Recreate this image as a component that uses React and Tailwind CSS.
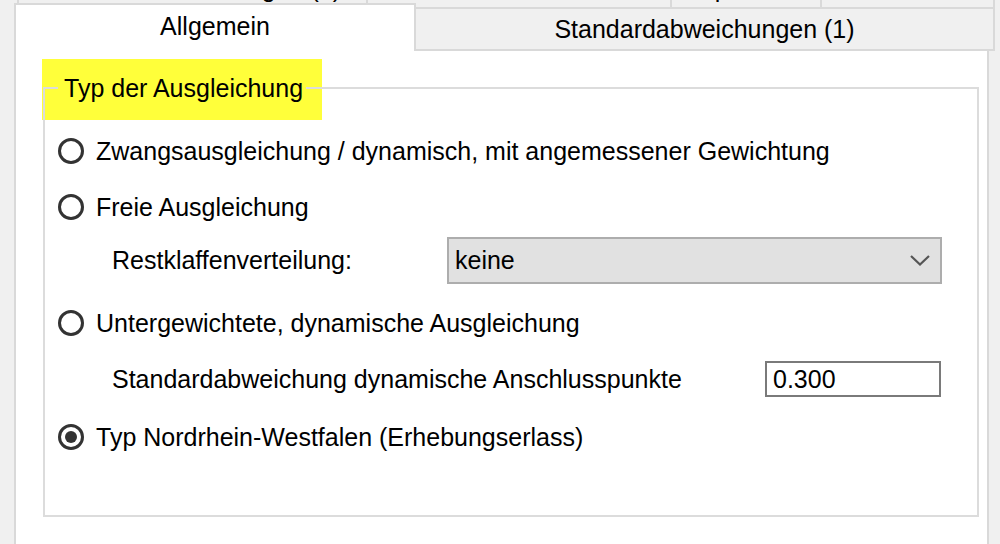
import React from "react";

const BACK_TABS = [
  { label: "Beobachtungen (1)", w: "w-[351px]", align: "justify-end pr-[25px]" },
  { label: "Netz", w: "w-[304px]", align: "justify-center" },
  { label: "Optionen", w: "w-[150px]", align: "justify-center" },
  { label: "Ausreißer", w: "w-[173px]", align: "justify-center" },
];

function Radio({ checked }) {
  return (
    <span className="w-[26px] h-[26px] rounded-full border-[3px] border-[#333333] bg-white flex items-center justify-center shrink-0">
      {checked && <span className="w-[12px] h-[12px] rounded-full bg-[#333333]" />}
    </span>
  );
}

function Option({ checked, label, height }) {
  return (
    <div className={`flex items-center gap-[12px] pl-[13px] ${height}`}>
      <Radio checked={checked} />
      <span className="leading-none">{label}</span>
    </div>
  );
}

export default function App() {
  return (
    <div className="w-[1000px] h-[544px] overflow-hidden bg-[#f0f0f0] text-black text-[25px] font-['Liberation_Sans',Arial,sans-serif] flex flex-col">
      {/* back row of tabs, only the bottom edge is visible */}
      <div className="flex h-[9px] ml-[17px] w-[978px] border-b-2 border-[#d9d9d9] overflow-hidden shrink-0">
        {BACK_TABS.map((t, i) => (
          <div
            key={t.label}
            className={`${t.w} flex items-start border-r-2 border-[#d9d9d9] ${i === 0 ? "border-l-2" : ""} ${t.align}`}
          >
            <span className="leading-none -mt-[24px] whitespace-nowrap">{t.label}</span>
          </div>
        ))}
      </div>

      {/* front row of tabs */}
      <div className="flex items-end h-[42px] ml-[14px] shrink-0">
        <div className="w-[402px] h-[48px] bg-white border-x-2 border-t-2 border-[#d9d9d9] flex justify-center pt-[9px]">
          <span className="leading-none">Allgemein</span>
        </div>
        <div className="w-[579px] h-[42px] bg-[#f0f0f0] border-r-2 border-b-2 border-[#d9d9d9] flex justify-center pt-[8px]">
          <span className="leading-none">Standardabweichungen (1)</span>
        </div>
      </div>

      {/* tab page */}
      <div className="relative isolate ml-[14px] w-[975px] flex-1 bg-white border-x-2 border-[#d9d9d9]">
        <div className="relative ml-[27px] mt-[23px] w-[936px]">
          <div className="absolute -left-[1px] -top-[15px] w-[280px] h-[61px] bg-[#ffff3a] -z-10" />

          <div className="flex items-center h-[28px]">
            <div className="w-[15px] border-t-2 border-[#dcdcdc]" />
            <span className="leading-none pl-[6px] pr-[3px] whitespace-nowrap">Typ der Ausgleichung</span>
            <div className="flex-1 border-t-2 border-[#dcdcdc]" />
          </div>

          <div className="-mt-[14px] h-[429px] border-x-2 border-b-2 border-[#dcdcdc] pt-[35px]">
            <Option label="Zwangsausgleichung / dynamisch, mit angemessener Gewichtung" height="h-[56px]" />
            <Option label="Freie Ausgleichung" height="h-[56px]" />

            <div className="flex items-center h-[50px] pl-[67px]">
              <span className="w-[335px] leading-none">Restklaffenverteilung:</span>
              <div className="w-[495px] h-[47px] bg-[#e1e1e1] border-2 border-[#adadad] flex items-center justify-between pl-[6px] pr-[10px]">
                <span className="leading-none">keine</span>
                <svg width="20" height="11" viewBox="0 0 20 11" fill="none">
                  <polyline points="1,1 10,9.5 19,1" stroke="#555555" strokeWidth="2.2" />
                </svg>
              </div>
            </div>

            <Option label="Untergewichtete, dynamische Ausgleichung" height="h-[76px]" />

            <div className="flex items-center h-[36px] pl-[67px]">
              <span className="w-[653px] leading-none">Standardabweichung dynamische Anschlusspunkte</span>
              <div className="w-[176px] h-[36px] border-2 border-[#7a7a7a] flex items-center pl-[6px]">
                <span className="leading-none">0.300</span>
              </div>
            </div>

            <Option checked label="Typ Nordrhein-Westfalen (Erhebungserlass)" height="h-[80px]" />
          </div>
        </div>
      </div>
    </div>
  );
}
